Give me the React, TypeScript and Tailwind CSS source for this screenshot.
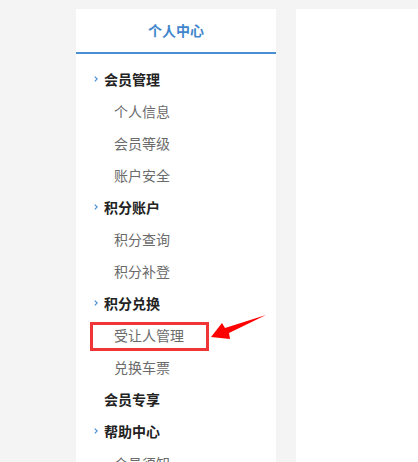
import React from "react";

const Chevron = () => (
  <svg width="4" height="6" viewBox="0 0 4 6" className="shrink-0">
    <path d="M0.8 0.6 L3.2 3 L0.8 5.4" fill="none" stroke="#4a8fd4" strokeWidth="1.2" />
  </svg>
);

type Item = { label: string; group?: boolean; bullet?: boolean; mark?: boolean };

const items: Item[] = [
  { label: "会员管理", group: true, bullet: true },
  { label: "个人信息" },
  { label: "会员等级" },
  { label: "账户安全" },
  { label: "积分账户", group: true, bullet: true },
  { label: "积分查询" },
  { label: "积分补登" },
  { label: "积分兑换", group: true, bullet: true },
  { label: "受让人管理", mark: true },
  { label: "兑换车票" },
  { label: "会员专享", group: true },
  { label: "帮助中心", group: true, bullet: true },
  { label: "会员须知" },
];

export default function App() {
  return (
    <div
      className="w-[418px] h-[462px] overflow-hidden bg-[#f4f4f4] relative"
      style={{ fontFamily: '"Noto Sans CJK SC", "Noto Sans", sans-serif' }}
    >
      <div className="flex pt-[9px] pl-[76px] gap-[20px] h-full">
        <div className="w-[200px] bg-white shrink-0 h-full">
          <div className="h-[43px] flex items-center justify-center text-[14px] font-bold text-[#3f85cc]">
            个人中心
          </div>
          <div className="h-[2px] bg-[#4a8fd4]" />
          <div className="pt-[9px]">
            {items.map((it) => (
              <div key={it.label} className="relative h-[32px] flex items-center text-[14px] leading-none">
                {it.group ? (
                  <div className="flex items-center pl-[18px]">
                    <div className="w-[10px] flex items-center">{it.bullet ? <Chevron /> : null}</div>
                    <span className="font-bold text-[#222]">{it.label}</span>
                  </div>
                ) : (
                  <span className="pl-[38px] text-[#6b6b6b]">{it.label}</span>
                )}
                {it.mark ? (
                  <div className="absolute left-[14px] top-[3px] w-[119px] h-[29px] border-[3px] border-[#ef3535]" />
                ) : null}
              </div>
            ))}
          </div>
        </div>
        <div className="flex-1 bg-white h-full" />
      </div>
      <svg
        className="absolute left-0 top-0 pointer-events-none"
        width="418"
        height="462"
        viewBox="0 0 418 462"
      >
        <polygon
          points="211,337 222,323 225,328 266,315 229,333 230,339"
          fill="#ff0000"
        />
      </svg>
    </div>
  );
}
